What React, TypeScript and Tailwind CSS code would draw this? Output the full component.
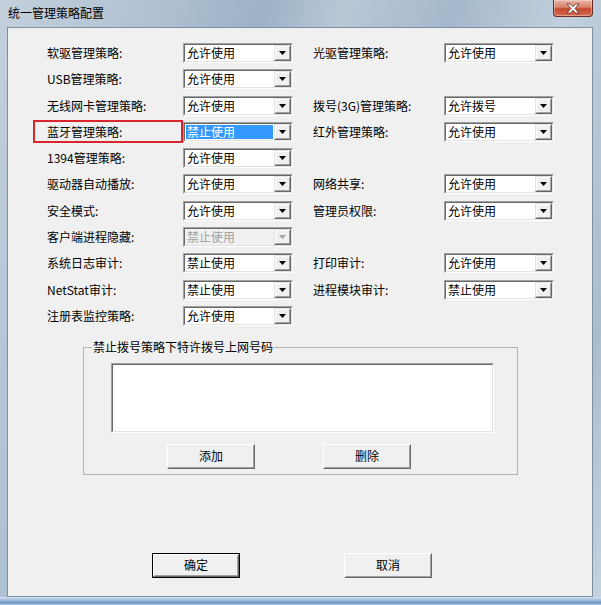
import React from 'react';

type Row = {
  l: string;
  lv: string;
  state?: 'selected' | 'disabled';
  r?: string;
  rv?: string;
};

const rows: Row[] = [
  { l: '软驱管理策略:', lv: '允许使用', r: '光驱管理策略:', rv: '允许使用' },
  { l: 'USB管理策略:', lv: '允许使用' },
  { l: '无线网卡管理策略:', lv: '允许使用', r: '拨号(3G)管理策略:', rv: '允许拨号' },
  { l: '蓝牙管理策略:', lv: '禁止使用', state: 'selected', r: '红外管理策略:', rv: '允许使用' },
  { l: '1394管理策略:', lv: '允许使用' },
  { l: '驱动器自动播放:', lv: '允许使用', r: '网络共享:', rv: '允许使用' },
  { l: '安全模式:', lv: '允许使用', r: '管理员权限:', rv: '允许使用' },
  { l: '客户端进程隐藏:', lv: '禁止使用', state: 'disabled' },
  { l: '系统日志审计:', lv: '禁止使用', r: '打印审计:', rv: '允许使用' },
  { l: 'NetStat审计:', lv: '禁止使用', r: '进程模块审计:', rv: '禁止使用' },
  { l: '注册表监控策略:', lv: '允许使用' },
];

function DropButton({ disabled }: { disabled?: boolean }) {
  return (
    <div className="w-[17px] h-full border border-t-[#e3e3e3] border-l-[#e3e3e3] border-r-[#696969] border-b-[#696969] bg-[#f0f0f0]">
      <div className="w-full h-full flex items-center justify-center border border-t-[#ffffff] border-l-[#ffffff] border-r-[#a0a0a0] border-b-[#a0a0a0]">
        <svg width="7" height="4" viewBox="0 0 7 4">
          <path d="M0 0h7L3.5 4z" fill={disabled ? '#a0a0a0' : '#000000'} />
        </svg>
      </div>
    </div>
  );
}

function Combo({ value, state }: { value: string; state?: 'selected' | 'disabled' }) {
  const disabled = state === 'disabled';
  const selected = state === 'selected';
  return (
    <div className="w-[110px] h-[20px] border border-t-[#a0a0a0] border-l-[#a0a0a0] border-r-[#ffffff] border-b-[#ffffff]">
      <div
        className={`h-full flex border border-t-[#696969] border-l-[#696969] border-r-[#e3e3e3] border-b-[#e3e3e3] ${
          disabled ? 'bg-[#f0f0f0]' : 'bg-white'
        }`}
      >
        <div className="flex-1 flex p-[1px]">
          <span
            className={`flex-1 flex items-center pl-[1px] leading-none ${
              selected ? 'bg-[#3399ff] text-white' : disabled ? 'text-[#a0a0a0]' : 'text-black'
            }`}
          >
            {value}
          </span>
        </div>
        <DropButton disabled={disabled} />
      </div>
    </div>
  );
}

function Button({ label, primary }: { label: string; primary?: boolean }) {
  return (
    <div className={`w-[88px] h-[25px] ${primary ? 'border border-[#000000]' : ''}`}>
      <div className="w-full h-full border border-t-[#ffffff] border-l-[#ffffff] border-r-[#696969] border-b-[#696969] bg-[#f0f0f0]">
        <div className="w-full h-full flex items-center justify-center border border-t-[#f0f0f0] border-l-[#f0f0f0] border-r-[#a0a0a0] border-b-[#a0a0a0] text-black leading-none">
          {label}
        </div>
      </div>
    </div>
  );
}

function CloseButton() {
  return (
    <div className="w-[40px] h-[17px] rounded-b-[4px] border border-t-0 border-[#6a2c22] bg-[linear-gradient(180deg,#eab4a6_0%,#d9826c_45%,#c24a30_55%,#d46a4f_100%)] flex items-center justify-center shadow-[inset_0_0_0_1px_rgba(255,255,255,0.35)]">
      <svg width="14" height="11" viewBox="0 0 14 11">
        <path
          d="M1 1h3.5L7 3.8 9.5 1H13L9 5.5 13 10H9.5L7 7.2 4.5 10H1L5 5.5z"
          fill="#ffffff"
          stroke="#5a2a20"
          strokeWidth="0.8"
          strokeLinejoin="round"
        />
      </svg>
    </div>
  );
}

export default function App() {
  return (
    <div className="w-[601px] h-[605px] flex flex-col bg-[linear-gradient(105deg,#c3d0dc_0%,#b0c1d2_20%,#9db2c6_35%,#b7c7d6_45%,#a5b8cb_60%,#c2d0dd_75%,#aabdce_90%,#c6d3df_100%)] font-['Noto_Sans_CJK_SC',sans-serif] text-[12px]">
      <div className="h-[27px] flex items-start justify-between pl-[8px] pr-[8px]">
        <span className="mt-[6px] leading-[14px] text-black">统一管理策略配置</span>
        <CloseButton />
      </div>

      <div className="flex flex-1">
        <div className="w-[7px]" />
        <div className="w-[586px] border border-[#7d8fa3] bg-[#f0f0f0] flex flex-col pt-[15px] pl-[39px]">
          <div className="flex flex-col gap-[6.3px]">
            {rows.map((row) => (
              <div key={row.l} className="relative h-[20px] grid grid-cols-[136px_110px_20px_131px_110px] items-center">
                {row.state === 'selected' && (
                  <div className="absolute left-[-14px] top-[-2px] w-[150px] h-[23px] border-2 border-[#d8262c]" />
                )}
                <span className="text-black leading-none">{row.l}</span>
                <Combo value={row.lv} state={row.state} />
                <span />
                {row.r ? <span className="text-black leading-none">{row.r}</span> : <span />}
                {row.rv ? <Combo value={row.rv} /> : <span />}
              </div>
            ))}
          </div>

          <div className="relative mt-[21px] ml-[36px] w-[435px] border border-[#b4b4b4] pt-[15px] pb-[5px] pl-[27px]">
            <span className="absolute left-[8px] top-[-8px] px-[1px] bg-[#f0f0f0] leading-[14px] text-black">
              禁止拨号策略下特许拨号上网号码
            </span>
            <div className="w-[383px] h-[70px] border border-t-[#a0a0a0] border-l-[#a0a0a0] border-r-[#ffffff] border-b-[#ffffff]">
              <div className="w-full h-full bg-white border border-t-[#696969] border-l-[#696969] border-r-[#e3e3e3] border-b-[#e3e3e3]" />
            </div>
            <div className="mt-[11px] ml-[56px] flex gap-[68px]">
              <Button label="添加" />
              <Button label="删除" />
            </div>
          </div>

          <div className="mt-[78px] ml-[105px] flex gap-[104px]">
            <Button label="确定" primary />
            <Button label="取消" />
          </div>
        </div>
        <div className="flex-1" />
      </div>

      <div className="h-[8px] bg-[linear-gradient(180deg,#d7e2ee_0%,#9fbcdb_40%,#6b98c9_70%,#a9c4e0_100%)]" />
    </div>
  );
}
